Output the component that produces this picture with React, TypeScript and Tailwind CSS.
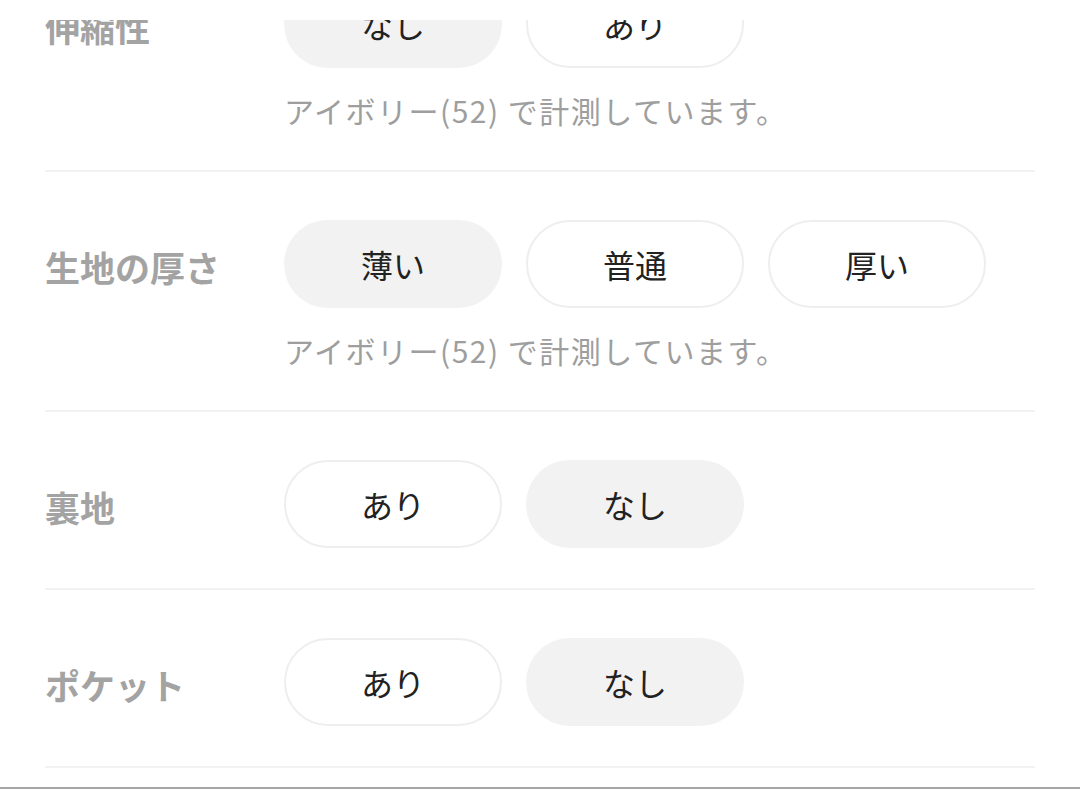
const rows = [
  { label: "伸縮性", options: ["なし", "あり"], selected: 0, note: true },
  { label: "生地の厚さ", options: ["薄い", "普通", "厚い"], selected: 0, note: true },
  { label: "裏地", options: ["あり", "なし"], selected: 1, note: false },
  { label: "ポケット", options: ["あり", "なし"], selected: 1, note: false },
];

const App = () => {
  return (
    <div
      className="flex h-[789px] flex-col overflow-hidden bg-white border-b-2 border-[#a6a6a6]"
      style={{ fontFamily: '"Noto Sans CJK JP", "Noto Sans", sans-serif' }}
    >
      {/* top edge of the scroll area */}
      <div className="h-[20px] shrink-0 bg-white" />
      <div className="flex-1 overflow-hidden">
        <div className="-mt-[88px] px-[45px]">
          {rows.map((row) => (
            <div
              key={row.label}
              className={`border-b-2 border-[#f2f2f2] pt-[48px] ${row.note ? "pb-[40px]" : "pb-[40px]"}`}
            >
              <div className="flex items-center">
                <div className="w-[239px] pt-1 text-[35px] font-bold leading-none text-[#a3a3a3]">
                  {row.label}
                </div>
                <div className="flex gap-6">
                  {row.options.map((opt, i) => (
                    <button
                      key={opt}
                      className={
                        i === row.selected
                          ? "flex h-[88px] w-[218px] items-center justify-center rounded-full bg-[#f2f2f2] text-[32px] text-[#222]"
                          : "flex h-[88px] w-[218px] items-center justify-center rounded-full border-2 border-[#eeeeee] bg-white text-[32px] text-[#222]"
                      }
                    >
                      {opt}
                    </button>
                  ))}
                </div>
              </div>
              {row.note && (
                <p className="ml-[239px] mt-[22px] text-[30px] leading-[40px] tracking-[1.5px] text-[#9e9e9e]">
                  アイボリー(52) で計測しています。
                </p>
              )}
            </div>
          ))}
        </div>
      </div>
    </div>
  );
};

export default App;
